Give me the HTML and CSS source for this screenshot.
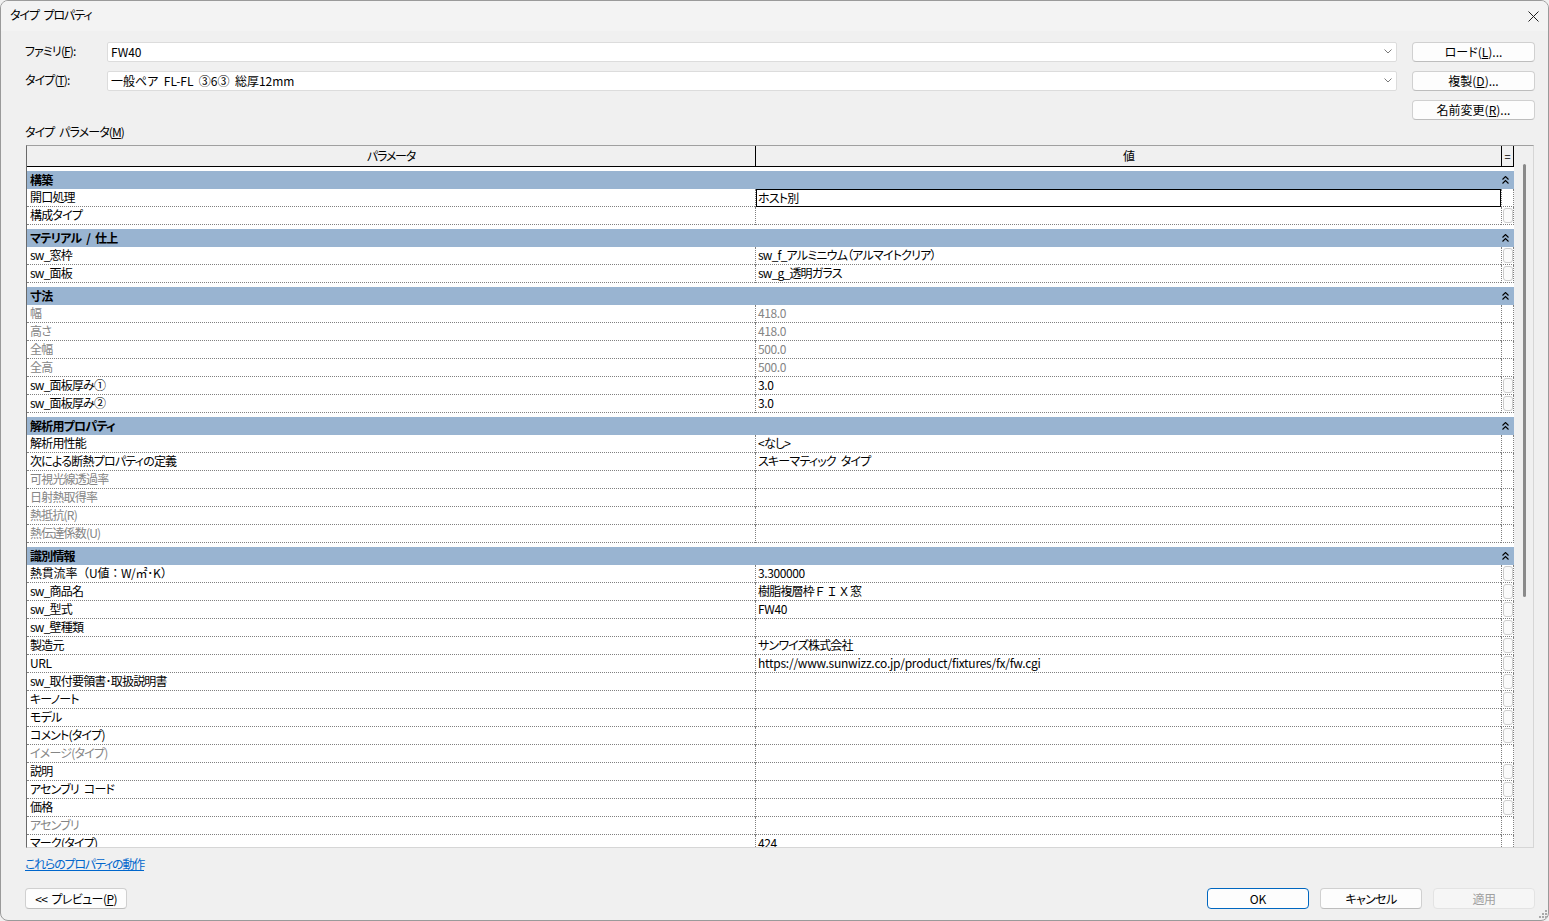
FILE: index.html
```html
<!DOCTYPE html>
<html lang="ja">
<head>
<meta charset="utf-8">
<title>タイプ プロパティ</title>
<link rel="stylesheet" href="styles.css">
</head>
<body>
<div class="window">
  <div class="titlebar">
    <span class="title">タイプ プロパティ</span>
    <svg class="close" width="11" height="11" viewBox="0 0 11 11"><path d="M0.5 0.5 L10.5 10.5 M10.5 0.5 L0.5 10.5" stroke="#1f1f1f" stroke-width="1" fill="none"/></svg>
  </div>
  <div class="client">
    <div class="top">
      <div class="lbl">ファミリ(<u>F</u>):</div>
      <div class="combo"><span>FW40</span><svg width="8" height="5" viewBox="0 0 8 5"><path d="M0.5 0.5 L4 4 L7.5 0.5" stroke="#7a7a7a" fill="none"/></svg></div>
      <button class="btn">ロード(<u>L</u>)...</button>
      <div class="lbl">タイプ(<u>T</u>):</div>
      <div class="combo"><span>一般ペア&nbsp;&nbsp;FL-FL&nbsp;&nbsp;③6③&nbsp;&nbsp;総厚12mm</span><svg width="8" height="5" viewBox="0 0 8 5"><path d="M0.5 0.5 L4 4 L7.5 0.5" stroke="#7a7a7a" fill="none"/></svg></div>
      <button class="btn">複製(<u>D</u>)...</button>
      <div></div>
      <div></div>
      <button class="btn">名前変更(<u>R</u>)...</button>
    </div>
    <div class="seclabel">タイプ パラメータ(<u>M</u>)</div>
    <div class="table">
      <div class="grid">
        <div class="head">
          <div class="hc hp">パラメータ</div>
          <div class="hc hv">値</div>
          <div class="hc hs">=</div>
        </div>
        <div class="body">
          <div class="grp">
            <div class="gh"><span>構築</span><svg class="col" width="7" height="8" viewBox="0 0 7 8"><path d="M0.5 3.5 L3.5 0.5 L6.5 3.5 M0.5 7.5 L3.5 4.5 L6.5 7.5" stroke="#000" stroke-width="1.1" fill="none"/></svg></div>
            <div class="row"><div class="p">開口処理</div><div class="v sel"><div class="edit">ホスト別</div></div><div class="s"></div></div>
            <div class="row"><div class="p">構成タイプ</div><div class="v"></div><div class="s"><span class="gp"></span></div></div>
          </div>
          <div class="grp">
            <div class="gh"><span>マテリアル / 仕上</span><svg class="col" width="7" height="8" viewBox="0 0 7 8"><path d="M0.5 3.5 L3.5 0.5 L6.5 3.5 M0.5 7.5 L3.5 4.5 L6.5 7.5" stroke="#000" stroke-width="1.1" fill="none"/></svg></div>
            <div class="row"><div class="p">sw_窓枠</div><div class="v">sw_f_アルミニウム（アルマイトクリア）</div><div class="s"><span class="gp"></span></div></div>
            <div class="row"><div class="p">sw_面板</div><div class="v">sw_g_透明ガラス</div><div class="s"><span class="gp"></span></div></div>
          </div>
          <div class="grp">
            <div class="gh"><span>寸法</span><svg class="col" width="7" height="8" viewBox="0 0 7 8"><path d="M0.5 3.5 L3.5 0.5 L6.5 3.5 M0.5 7.5 L3.5 4.5 L6.5 7.5" stroke="#000" stroke-width="1.1" fill="none"/></svg></div>
            <div class="row dim"><div class="p">幅</div><div class="v lat">418.0</div><div class="s"></div></div>
            <div class="row dim"><div class="p">高さ</div><div class="v lat">418.0</div><div class="s"></div></div>
            <div class="row dim"><div class="p">全幅</div><div class="v lat">500.0</div><div class="s"></div></div>
            <div class="row dim"><div class="p">全高</div><div class="v lat">500.0</div><div class="s"></div></div>
            <div class="row"><div class="p">sw_面板厚み①</div><div class="v lat">3.0</div><div class="s"><span class="gp"></span></div></div>
            <div class="row"><div class="p">sw_面板厚み②</div><div class="v lat">3.0</div><div class="s"><span class="gp"></span></div></div>
          </div>
          <div class="grp">
            <div class="gh"><span>解析用プロパティ</span><svg class="col" width="7" height="8" viewBox="0 0 7 8"><path d="M0.5 3.5 L3.5 0.5 L6.5 3.5 M0.5 7.5 L3.5 4.5 L6.5 7.5" stroke="#000" stroke-width="1.1" fill="none"/></svg></div>
            <div class="row"><div class="p">解析用性能</div><div class="v">&lt;なし&gt;</div><div class="s"></div></div>
            <div class="row"><div class="p">次による断熱プロパティの定義</div><div class="v">スキーマティック タイプ</div><div class="s"></div></div>
            <div class="row dim"><div class="p">可視光線透過率</div><div class="v"></div><div class="s"></div></div>
            <div class="row dim"><div class="p">日射熱取得率</div><div class="v"></div><div class="s"></div></div>
            <div class="row dim"><div class="p">熱抵抗(R)</div><div class="v"></div><div class="s"></div></div>
            <div class="row dim"><div class="p">熱伝達係数(U)</div><div class="v"></div><div class="s"></div></div>
          </div>
          <div class="grp">
            <div class="gh"><span>識別情報</span><svg class="col" width="7" height="8" viewBox="0 0 7 8"><path d="M0.5 3.5 L3.5 0.5 L6.5 3.5 M0.5 7.5 L3.5 4.5 L6.5 7.5" stroke="#000" stroke-width="1.1" fill="none"/></svg></div>
            <div class="row"><div class="p np">熱貫流率（U値：W/㎡･K）</div><div class="v lat">3.300000</div><div class="s"><span class="gp"></span></div></div>
            <div class="row"><div class="p">sw_商品名</div><div class="v">樹脂複層枠<span class="fw">ＦＩＸ</span>窓</div><div class="s"><span class="gp"></span></div></div>
            <div class="row"><div class="p">sw_型式</div><div class="v lat">FW40</div><div class="s"><span class="gp"></span></div></div>
            <div class="row"><div class="p">sw_壁種類</div><div class="v"></div><div class="s"><span class="gp"></span></div></div>
            <div class="row"><div class="p">製造元</div><div class="v">サンワイズ株式会社</div><div class="s"><span class="gp"></span></div></div>
            <div class="row"><div class="p lat">URL</div><div class="v url">https://www.sunwizz.co.jp/product/fixtures/fx/fw.cgi</div><div class="s"><span class="gp"></span></div></div>
            <div class="row"><div class="p">sw_取付要領書･取扱説明書</div><div class="v"></div><div class="s"><span class="gp"></span></div></div>
            <div class="row"><div class="p">キーノート</div><div class="v"></div><div class="s"><span class="gp"></span></div></div>
            <div class="row"><div class="p">モデル</div><div class="v"></div><div class="s"><span class="gp"></span></div></div>
            <div class="row"><div class="p">コメント(タイプ)</div><div class="v"></div><div class="s"><span class="gp"></span></div></div>
            <div class="row dim"><div class="p">イメージ(タイプ)</div><div class="v"></div><div class="s"></div></div>
            <div class="row"><div class="p">説明</div><div class="v"></div><div class="s"><span class="gp"></span></div></div>
            <div class="row"><div class="p">アセンブリ コード</div><div class="v"></div><div class="s"><span class="gp"></span></div></div>
            <div class="row"><div class="p">価格</div><div class="v"></div><div class="s"><span class="gp"></span></div></div>
            <div class="row dim"><div class="p">アセンブリ</div><div class="v"></div><div class="s"></div></div>
            <div class="row"><div class="p">マーク(タイプ)</div><div class="v lat">424</div><div class="s"></div></div>
          </div>
        </div>
      </div>
      <div class="sb"><div class="thumb"></div></div>
    </div>
    <a class="link" href="#">これらのプロパティの動作</a>
    <div class="bottom">
      <button class="btn wide">&lt;&lt; プレビュー(<u>P</u>)</button>
      <button class="btn wide ok">OK</button>
      <button class="btn wide">キャンセル</button>
      <button class="btn wide disabled">適用</button>
    </div>
  </div>
  <svg class="grip" width="9" height="9" viewBox="0 0 9 9"><g fill="#a8a8a8"><rect x="7" y="1" width="2" height="2"/><rect x="4" y="4" width="2" height="2"/><rect x="7" y="4" width="2" height="2"/><rect x="1" y="7" width="2" height="2"/><rect x="4" y="7" width="2" height="2"/><rect x="7" y="7" width="2" height="2"/></g></svg>
</div>
</body>
</html>
```

FILE: styles.css
```css
* { box-sizing: border-box; }
html, body { margin: 0; padding: 0; }
body {
  width: 1549px;
  height: 921px;
  overflow: hidden;
  background: #f0f0f0;
  font-family: "Noto Sans CJK JP", "Noto Sans", sans-serif;
  font-size: 12px;
  color: #000;
  font-feature-settings: "palt";
}
.window {
  position: relative;
  width: 1549px;
  height: 921px;
  border: 1px solid #9a9a9a;
  border-radius: 8px;
  background: #f0f0f0;
  overflow: hidden;
  display: flex;
  flex-direction: column;
}
.titlebar {
  height: 30px;
  flex: none;
  display: flex;
  align-items: center;
  justify-content: space-between;
  padding: 0 9px 0 9px;
  background: #f3f3f3;
}
.title {
  line-height: 14px;
  padding-bottom: 2px;
  letter-spacing: -1.1px;
  word-spacing: 3px;
}
.client {
  flex: 1;
  display: flex;
  flex-direction: column;
  padding: 11px 13px 0 24px;
}
.top {
  display: grid;
  grid-template-columns: 67px 1fr 123px;
  grid-auto-rows: 20px;
  column-gap: 15px;
  row-gap: 9px;
}
.lbl {
  line-height: 18px;
  white-space: nowrap;
  letter-spacing: -0.9px;
}
.combo {
  background: #fff;
  border: 1px solid #dcdcdc;
  border-radius: 2px;
  display: flex;
  align-items: center;
  justify-content: space-between;
  padding: 0 4px 1px 3px;
  line-height: 16px;
  white-space: nowrap;
}
.btn {
  font-family: inherit;
  font-size: 12px;
  font-feature-settings: "palt";
  color: #000;
  background: #fdfdfd;
  border: 1px solid #d0d0d0;
  border-bottom-color: #bdbdbd;
  border-radius: 4px;
  height: 20px;
  padding: 0 0 1px 0;
  line-height: 17px;
}
.seclabel {
  margin-top: 5px;
  margin-bottom: 6px;
  line-height: 14px;
  letter-spacing: -0.9px;
  word-spacing: 3px;
}
.table {
  flex: none;
  height: 703px;
  margin: 0 1px;
  display: flex;
  border-style: solid;
  border-width: 1px;
  border-color: #a0a0a0 #d6d6d6 #d6d6d6 #696969;
  background: #f0f0f0;
  overflow: hidden;
}
.grid {
  width: 1487px;
  flex: none;
  display: flex;
  flex-direction: column;
  overflow: hidden;
  background: #fff;
}
.head {
  display: flex;
  height: 21px;
  flex: none;
  background: #f0f0f0;
  border-bottom: 1px solid #000;
}
.hc {
  line-height: 20px;
  text-align: center;
  border-right: 1px solid #000;
  letter-spacing: -1.2px;
}
.hp { width: 729px; }
.hv { width: 746px; }
.hs { width: 12px; font-size: 11px; letter-spacing: 0; }
.body { background: #fff; }
.grp { padding-top: 4px; }
.gh {
  height: 18px;
  background: #99b4d1;
  font-weight: bold;
  line-height: 17px;
  padding: 0 5px 1px 3px;
  display: flex;
  align-items: center;
  justify-content: space-between;
  letter-spacing: -0.8px;
  word-spacing: 3px;
}
.gh .col { margin-top: 1px; }
.row { display: flex; height: 18px; }
.p, .v, .s {
  border-bottom: 1px dotted #808080;
  line-height: 16px;
  white-space: nowrap;
  overflow: hidden;
  letter-spacing: -0.8px;
  word-spacing: 3px;
}
.p { width: 728px; padding-left: 3px; }
.v { width: 746px; padding-left: 2px; border-left: 1px dotted #808080; }
.s {
  width: 13px;
  border-left: 1px dotted #808080;
  border-right: 1px dotted #808080;
  padding: 1px 0 0 1px;
}
.lat { letter-spacing: -0.4px; }
.url { letter-spacing: -0.25px; }
.np { font-feature-settings: normal; letter-spacing: -0.2px; }
.dim .p, .dim .v { color: #858585; }
.v.sel { border-bottom: none; padding: 0; }
.edit {
  height: 18px;
  border: 1px solid #000;
  padding-left: 1px;
  line-height: 15px;
}
.gp {
  display: block;
  width: 10px;
  height: 15px;
  border: 1px solid #cdcdcd;
  border-radius: 3px;
  background: #fafafa;
}
.fw { font-feature-settings: normal; letter-spacing: 0; }
.sb {
  width: 19px;
  flex: none;
  padding: 18px 0 0 9px;
  background: #f0f0f0;
}
.thumb {
  width: 3px;
  height: 433px;
  background: #8a8a8a;
  border-radius: 2px;
}
.link {
  align-self: flex-start;
  margin-top: 9px;
  line-height: 14px;
  color: #0066cc;
  text-decoration: underline;
  letter-spacing: -1.2px;
}
.bottom {
  display: flex;
  margin-top: 17px;
  gap: 11px;
}
.btn.wide { width: 102px; height: 21px; letter-spacing: -0.6px; word-spacing: 2px; }
.btn.ok { margin-left: auto; border-color: #0067c0; letter-spacing: 0; }
.btn.disabled { background: #f6f6f6; border-color: #e3e3e3; color: #a0a0a0; }
.grip { position: absolute; right: 1px; bottom: 2px; }
```
